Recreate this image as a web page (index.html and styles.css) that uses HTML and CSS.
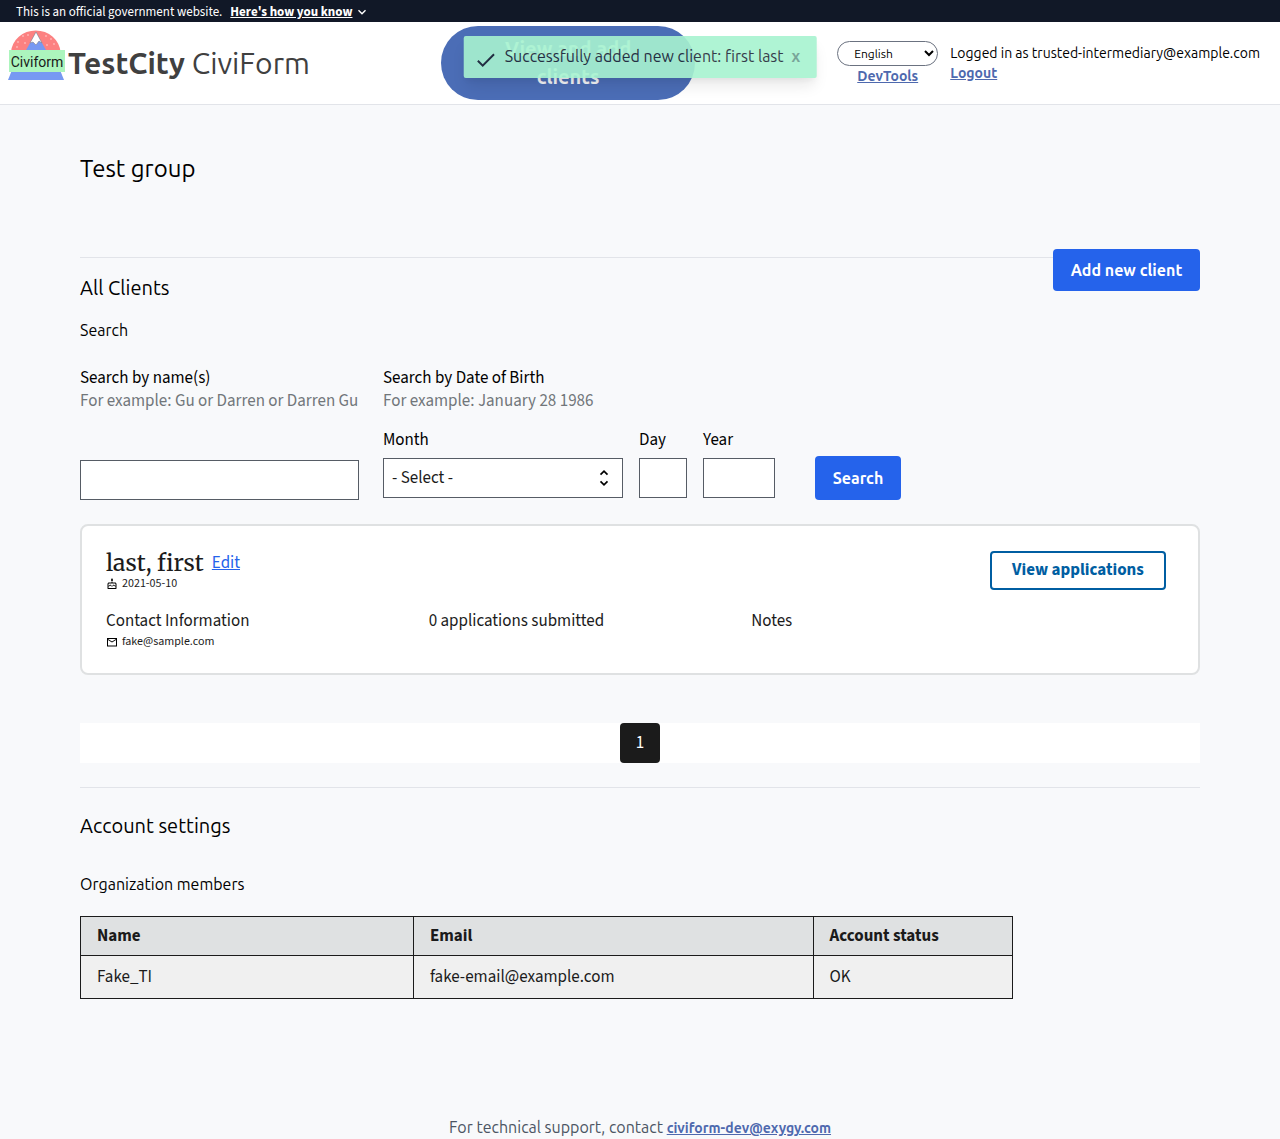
FILE: index.html
```html
<!DOCTYPE html>
<html lang="en">
<head>
<meta charset="utf-8">
<meta name="viewport" content="width=device-width, initial-scale=1">
<title>Test group</title>
<link rel="stylesheet" href="styles.css">
</head>
<body>
<div class="gov-banner">
  <span>This is an official government website.</span>
  <button type="button" class="gov-toggle">Here's how you know</button>
  <svg class="gov-chevron" viewBox="0 0 10 10" aria-hidden="true"><path d="M1.5 3.2 5 6.7 8.5 3.2" fill="none" stroke="currentColor" stroke-width="1.4"/></svg>
</div>
<header class="site-header">
  <a class="brand" href="#">
    <svg class="logo" viewBox="0 0 58 53" aria-hidden="true">
      <path d="M3 24a24.800 23 0 0 1 49.500 0z" fill="#fc8181"/>
      <path d="M28 4 39 24H17z" fill="#7799f2"/>
      <path d="M28 4 34 15 31 13 28 17 25 14 22 15z" fill="#fff" stroke="#777" stroke-width=".5"/>
      <g fill="#fed7d7"><circle cx="15" cy="8" r=".8"/><circle cx="20" cy="7" r=".8"/><circle cx="10" cy="14" r=".8"/><circle cx="17" cy="15" r=".8"/><circle cx="9" cy="19" r=".8"/><circle cx="38" cy="8" r=".8"/><circle cx="43" cy="11" r=".8"/><circle cx="39" cy="17" r=".8"/><circle cx="46" cy="16" r=".8"/></g>
      <path d="M4 42h48l4 10H0z" fill="#7799f2"/>
      <path d="M1 22h56v22H1z" fill="#acf5bd"/>
      <text class="logo-text" x="29" y="39" text-anchor="middle">Civiform</text>
    </svg>
    <span class="brand-name"><b>TestCity</b> CiviForm</span>
  </a>
  <a class="clients-link" href="#">View and add clients</a>
  <div class="account">
    <div class="account-tools">
      <select class="language" aria-label="Language"><option>English</option></select>
      <a class="link" href="#">DevTools</a>
    </div>
    <div class="account-user">
      <span>Logged in as trusted-intermediary@example.com</span>
      <a class="link" href="#">Logout</a>
    </div>
  </div>
</header>
<div class="toast" role="status">
  <svg class="toast-icon" viewBox="0 0 24 24" aria-hidden="true"><path d="M9 16.170 4.830 12l-1.420 1.410L9 19 21 7l-1.410-1.410z" fill="currentColor"/></svg>
  <span>Successfully added new client: first last</span>
  <button type="button" class="toast-close">x</button>
</div>
<main class="content">
  <h1>Test group</h1>
  <section class="clients">
    <div class="clients-head">
      <h2>All Clients</h2>
      <button type="button" class="btn btn-add">Add new client</button>
    </div>
    <h3>Search</h3>
    <form class="search">
      <div class="field">
        <label for="name">Search by name(s)</label>
        <span class="hint">For example: Gu or Darren or Darren Gu</span>
        <input id="name" class="box name-box" type="text">
      </div>
      <fieldset class="dob">
        <legend>Search by Date of Birth</legend>
        <span class="hint">For example: January 28 1986</span>
        <div class="dob-parts">
          <div class="part"><label for="month">Month</label><select id="month" class="box month"><option>- Select -</option></select></div>
          <div class="part"><label for="day">Day</label><input id="day" class="box day" type="text"></div>
          <div class="part"><label for="year">Year</label><input id="year" class="box year" type="text"></div>
        </div>
      </fieldset>
      <button type="button" class="btn btn-search">Search</button>
    </form>
    <article class="card">
      <div class="card-top">
        <div>
          <div class="client-title"><span class="client-name">last, first</span><a class="edit" href="#">Edit</a></div>
          <div class="meta"><svg viewBox="0 0 24 24" aria-hidden="true"><path d="M12 6c1.110 0 2-.9 2-2 0-.38-.1-.73-.29-1.030L12 0l-1.710 2.970c-.19.3-.29.65-.29 1.030 0 1.100.9 2 2 2zm6 3h-5V7h-2v2H6c-1.660 0-3 1.340-3 3v9c0 .55.45 1 1 1h16c.55 0 1-.45 1-1v-9c0-1.660-1.340-3-3-3zm1 11H5v-3c.9-.01 1.760-.37 2.400-1.010l1.090-1.070 1.070 1.070c1.310 1.310 3.590 1.300 4.890 0l1.080-1.070 1.070 1.070c.64.64 1.500 1 2.400 1.010v3zm0-4.500c-.51-.01-.99-.2-1.350-.57l-2.130-2.130-2.140 2.130c-.74.74-2.030.74-2.770 0L8.480 12.800l-2.140 2.130c-.35.36-.83.56-1.340.57V12c0-.55.45-1 1-1h12c.55 0 1 .45 1 1v3.500z"/></svg>2021-05-10</div>
        </div>
        <a class="view-apps" href="#">View applications</a>
      </div>
      <div class="card-info">
        <div>
          <div>Contact Information</div>
          <div class="meta"><svg viewBox="0 0 24 24" aria-hidden="true"><path d="M22 4H2v17h20V4zm-2 2-8 5-8-5h16zm0 13H4V8l8 5 8-5v11z"/></svg>fake@sample.com</div>
        </div>
        <div>0 applications submitted</div>
        <div>Notes</div>
      </div>
    </article>
    <nav class="pages" aria-label="Pagination"><a class="page" href="#" aria-current="page">1</a></nav>
  </section>
  <section class="settings">
    <h2>Account settings</h2>
    <h3>Organization members</h3>
    <table class="members">
      <colgroup><col class="col-name"><col class="col-email"><col class="col-status"></colgroup>
      <thead><tr><th scope="col">Name</th><th scope="col">Email</th><th scope="col">Account status</th></tr></thead>
      <tbody><tr><td>Fake_TI</td><td>fake-email@example.com</td><td>OK</td></tr></tbody>
    </table>
  </section>
</main>
<footer class="footer">For technical support, contact <a class="link" href="#">civiform-dev@exygy.com</a></footer>
</body>
</html>
```
FILE: styles.css
```css
:root {
  --ui: Ubuntu, "Noto Sans", sans-serif;
  --body: "Source Sans Pro Web", "Source Sans 3", "Source Sans Pro", "SourceSansPro", "Noto Sans CJK JP", sans-serif;
}
* { box-sizing: border-box; }
body { margin: 0; background: #f8f9fb; color: #000; font: 17px/23px var(--body); }
h1, h2, h3 { margin: 0; font-family: var(--ui); font-weight: 400; }
h1 { font-size: 24px; line-height: 32px; }
h2 { font-size: 20px; line-height: 28px; }
h3 { font-size: 16px; line-height: 24px; }
button, input, select { font: inherit; margin: 0; }

.gov-banner { display: flex; align-items: center; height: 22px; padding: 2px 16px 0; background: #111827; color: #fff; font-size: 13px; line-height: 20px; }
.gov-toggle { margin-left: 8px; padding: 0; border: 0; background: none; color: inherit; font-weight: 700; text-decoration: underline; cursor: pointer; }
.gov-chevron { width: 10px; height: 10px; margin-left: 5px; }

.site-header { display: grid; grid-template-columns: 441fr 254fr 585fr; align-items: center; padding: 4px 0; background: #fff; border-bottom: 1px solid #e2e4e9; font-family: var(--ui); }
.brand { display: flex; align-items: center; gap: 2px; padding-left: 8px; color: #404040; text-decoration: none; }
.logo { width: 58px; height: 53px; margin-bottom: 18px; }
.logo-text { font: 14px Roboto, sans-serif; fill: #1a1a1a; }
.brand-name { font-size: 30px; line-height: 36px; white-space: nowrap; }
.clients-link { padding: 9px 48px; border-radius: 37px; background: #4b6db6; color: #f3f4f6; font-size: 20px; font-weight: 700; line-height: 28px; text-align: center; text-decoration: none; }
.account { display: flex; justify-content: flex-end; gap: 12px; padding-right: 20px; font-size: 14px; line-height: 20px; }
.account-tools { display: flex; flex-direction: column; align-items: center; }
.account-user { display: flex; flex-direction: column; align-items: flex-start; padding-top: 2px; white-space: nowrap; }
.language { width: 101px; height: 25px; padding: 0 0 0 12px; border: 1px solid #6b7280; border-radius: 13px; background: #fff; color: #000; font-size: 12px; }
.link { color: #4e69ae; font-size: 14px; font-weight: 700; text-decoration: underline; }

.toast { position: absolute; top: 36px; left: 50%; transform: translateX(-50%); display: flex; align-items: flex-start; height: 42px; padding: 8px 16px 0 10px; border-radius: 2px; background: #a7f3d0; color: #1f2937; opacity: .9; box-shadow: 0 10px 15px -3px rgba(0, 0, 0, .1), 0 4px 6px -2px rgba(0, 0, 0, .05); font: 16px/24px var(--ui); white-space: nowrap; }
.toast-icon { width: 24px; height: 24px; margin: 4px 7px 0 0; }
.toast-close { margin-left: 8px; padding: 0; border: 0; background: none; color: #6b9c8e; font-weight: 700; cursor: pointer; }

.content { padding: 48px 80px 0; }
.clients { margin-top: 72px; padding-top: 16px; border-top: 1px solid #e2e4e9; }
.clients-head { display: flex; justify-content: space-between; align-items: flex-start; height: 28px; margin-bottom: 16px; }
.btn { border: 0; border-radius: 4px; background: #2563eb; color: #fff; font: 700 16px/24px var(--ui); cursor: pointer; }
.btn-add { width: 147px; height: 42px; margin-top: -25px; }
.btn-search { width: 86px; height: 44px; margin-left: 16px; }

.search { display: flex; align-items: flex-end; gap: 24px; margin-top: 25px; }
.field { display: flex; flex-direction: column; width: 279px; white-space: nowrap; }
.hint { display: block; color: #71767a; }
.box { height: 40px; padding: 0 8px; border: 1px solid #565c65; border-radius: 0; background: #fff; color: #1b1b1b; }
.name-box { margin-top: 47px; }
.dob { margin: 0; padding: 0 0 2px; border: 0; }
.dob legend { padding: 0; }
.dob-parts { display: flex; gap: 16px; margin-top: 16px; }
.part { display: flex; flex-direction: column; gap: 6px; }
.month { width: 240px; appearance: none; background: #fff url("data:image/svg+xml,%3Csvg xmlns='http://www.w3.org/2000/svg' viewBox='0 0 20 20'%3E%3Cpath d='M6.500 6.700 10 3.200l3.500 3.500M6.500 13.300 10 16.800l3.500-3.500' fill='none' stroke='%23000' stroke-width='1.700'/%3E%3C/svg%3E") no-repeat right 8px center / 20px 20px; }
.day { width: 48px; }
.year { width: 72px; }

.card { margin-top: 24px; padding: 25px 24px 22px; border: 2px solid #dfe1e2; border-radius: 8px; background: #fff; color: #1b1b1b; }
.card-top { display: flex; justify-content: space-between; align-items: flex-start; padding-right: 8px; }
.client-title { display: flex; align-items: center; gap: 8px; height: 24px; }
.client-name { font: 23px/24px Merriweather, "DejaVu Serif", serif; }
.edit { color: #2563eb; }
.meta { display: flex; align-items: center; gap: 4px; font-size: 12px; line-height: 18px; }
.meta svg { width: 12px; height: 12px; }
.view-apps { width: 176px; height: 39px; border: 2px solid #005ea2; border-radius: 4px; color: #005ea2; font-weight: 700; line-height: 35px; text-align: center; text-decoration: none; }
.card-info { display: grid; grid-template-columns: 29fr 29fr 38fr; margin-top: 17px; }

.pages { display: flex; justify-content: center; margin: 48px 0 24px; background: #fff; }
.page { width: 40px; height: 40px; border-radius: 4px; background: #1b1b1b; color: #fff; line-height: 41px; text-align: center; text-decoration: none; }

.settings { padding-top: 24px; border-top: 1px solid #e2e4e9; }
.settings h3 { margin: 32px 0 20px; }
.members { width: calc(100% * 5 / 6); table-layout: fixed; border-collapse: collapse; color: #1b1b1b; text-align: left; }
.members th, .members td { padding: 0 16px; border: 1px solid #1b1b1b; }
.members th { height: 39px; background: #dfe1e2; }
.members td { height: 43px; background: #f0f0f0; }
.col-name { width: calc(100% * 5 / 14); }
.col-email { width: calc(100% * 6 / 14); }
.col-status { width: calc(100% * 3 / 14); }

.footer { margin-top: 116px; color: #4b5563; font: 16px/24px var(--ui); text-align: center; }
```
